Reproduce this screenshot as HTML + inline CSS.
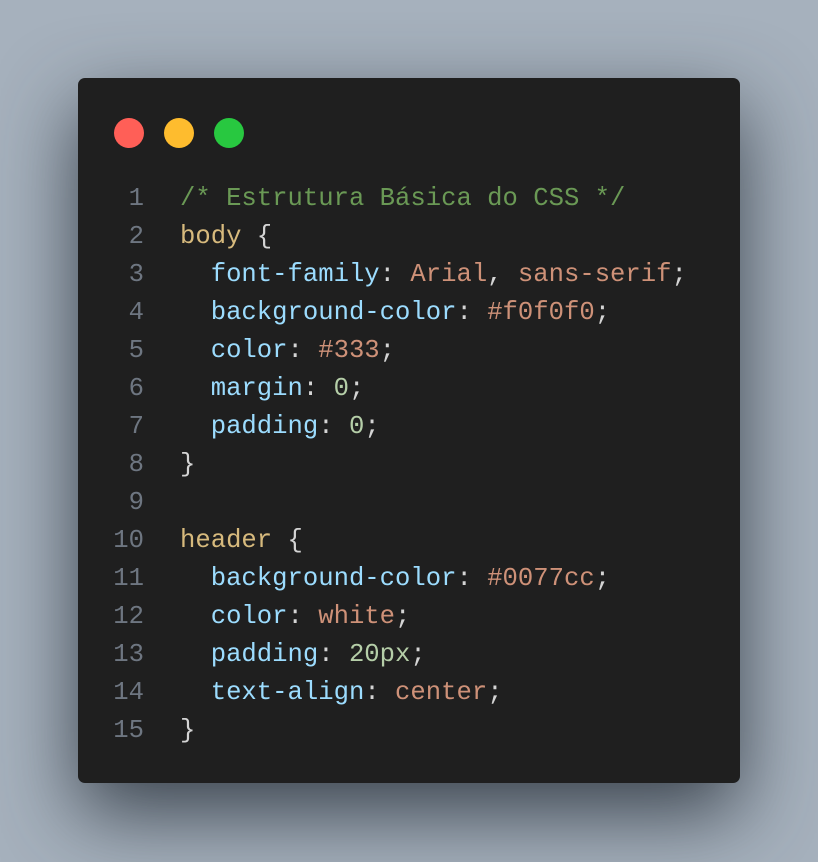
<!DOCTYPE html>
<html><head><meta charset="utf-8"><style>
html,body{margin:0;width:818px;height:862px;background:#a6b1bd;overflow:hidden}
.card{position:absolute;left:78px;top:78px;width:662px;height:705px;background:#1f1f1f;border-radius:7px;box-shadow:0 30px 80px rgba(40,48,58,.85)}
.dot{position:absolute;top:40px;width:30px;height:30px;border-radius:50%}
.code{position:absolute;left:0;top:102px;font-family:"Liberation Mono","DejaVu Sans Mono",monospace;font-size:25.6px;line-height:38px;white-space:pre;color:#d4d4d4}
.ln{display:inline-block;width:66px;text-align:right;color:#6e7681;margin-right:36px}
.c{color:#6a9955}.s{color:#d7ba7d}.p{color:#9cdcfe}.v{color:#ce9178}.n{color:#b5cea8}
</style></head><body>
<div class="card">
<div class="dot" style="left:36px;background:#ff5f57"></div>
<div class="dot" style="left:86px;background:#febc2e"></div>
<div class="dot" style="left:136px;background:#28c840"></div>
<div class="code"><span class="ln">1</span><span class="c">/* Estrutura Básica do CSS */</span>
<span class="ln">2</span><span class="s">body</span> {
<span class="ln">3</span>  <span class="p">font-family</span>: <span class="v">Arial</span>, <span class="v">sans-serif</span>;
<span class="ln">4</span>  <span class="p">background-color</span>: <span class="v">#f0f0f0</span>;
<span class="ln">5</span>  <span class="p">color</span>: <span class="v">#333</span>;
<span class="ln">6</span>  <span class="p">margin</span>: <span class="n">0</span>;
<span class="ln">7</span>  <span class="p">padding</span>: <span class="n">0</span>;
<span class="ln">8</span>}
<span class="ln">9</span>
<span class="ln">10</span><span class="s">header</span> {
<span class="ln">11</span>  <span class="p">background-color</span>: <span class="v">#0077cc</span>;
<span class="ln">12</span>  <span class="p">color</span>: <span class="v">white</span>;
<span class="ln">13</span>  <span class="p">padding</span>: <span class="n">20px</span>;
<span class="ln">14</span>  <span class="p">text-align</span>: <span class="v">center</span>;
<span class="ln">15</span>}</div>
</div>
</body></html>
